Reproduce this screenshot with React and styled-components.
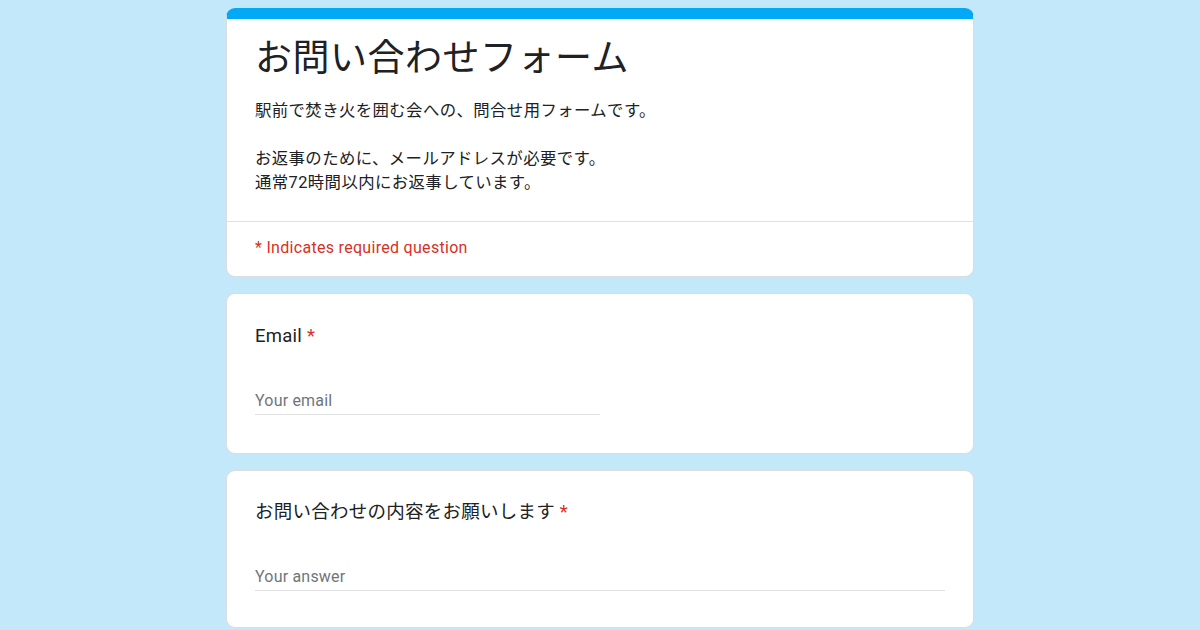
import React from "react";
import styled, { createGlobalStyle } from "styled-components";

const Global = createGlobalStyle`
  html, body { margin: 0; padding: 0; }
  body {
    background: #c2e8f9;
    font-family: Roboto, "Noto Sans CJK JP", sans-serif;
    color: #202124;
  }
`;

const Page = styled.main`
  width: 748px;
  margin: 8px auto 0;
  display: flex;
  flex-direction: column;
  gap: 16px;
`;

const Card = styled.section`
  background: #fff;
  border: 1px solid #dadce0;
  border-radius: 9px;
  box-sizing: border-box;
  display: flex;
  flex-direction: column;
`;

const HeaderCard = styled(Card)`
  border-top: 11px solid #03a9f4;
`;

const HeaderBody = styled.div`
  padding: 16px 28px 26px;
  border-bottom: 1px solid #e0e0e0;
`;

const Title = styled.h1`
  margin: 0;
  font-family: Roboto, "Noto Sans CJK JP", sans-serif;
  font-weight: 400;
  font-size: 37px;
  line-height: 48px;
  letter-spacing: 0.5px;
  color: #202124;
`;

const Description = styled.p`
  margin: 16px 0 0;
  font-size: 16.4px;
  line-height: 24px;
  letter-spacing: 0.4px;
  color: #202124;
  white-space: pre-line;
`;

const RequiredNote = styled.div`
  padding: 16px 28px 18px;
  font-size: 16px;
  line-height: 20px;
  letter-spacing: 0.3px;
  color: #d93025;
`;

const QuestionCard = styled(Card)`
  padding: ${(p) => p.$top}px 28px ${(p) => p.$bottom}px;
`;

const QuestionTitle = styled.div`
  font-size: 18.5px;
  line-height: 24px;
  letter-spacing: 0.25px;
  color: #202124;
`;

const Star = styled.span`
  color: #d93025;
`;

const Input = styled.input`
  margin-top: 42px;
  width: ${(p) => (p.$half ? "50%" : "100%")};
  height: 25px;
  box-sizing: border-box;
  border: none;
  border-bottom: 1px solid #e0e0e0;
  padding: 0 0 4px;
  outline: none;
  background: transparent;
  font-family: Roboto, "Noto Sans CJK JP", sans-serif;
  font-size: 16px;
  line-height: 20px;
  letter-spacing: 0.2px;
  color: #202124;
  &::placeholder {
    color: #70757a;
  }
`;

export default function App() {
  return (
    <>
      <Global />
      <Page>
        <HeaderCard>
          <HeaderBody>
            <Title>お問い合わせフォーム</Title>
            <Description>
              {"駅前で焚き火を囲む会への、問合せ用フォームです。\n\nお返事のために、メールアドレスが必要です。\n通常72時間以内にお返事しています。"}
            </Description>
          </HeaderBody>
          <RequiredNote>* Indicates required question</RequiredNote>
        </HeaderCard>
        <QuestionCard $top={30} $bottom={38}>
          <QuestionTitle>
            Email <Star>*</Star>
          </QuestionTitle>
          <Input $half type="email" placeholder="Your email" />
        </QuestionCard>
        <QuestionCard $top={29} $bottom={36}>
          <QuestionTitle>
            お問い合わせの内容をお願いします <Star>*</Star>
          </QuestionTitle>
          <Input type="text" placeholder="Your answer" />
        </QuestionCard>
      </Page>
    </>
  );
}
